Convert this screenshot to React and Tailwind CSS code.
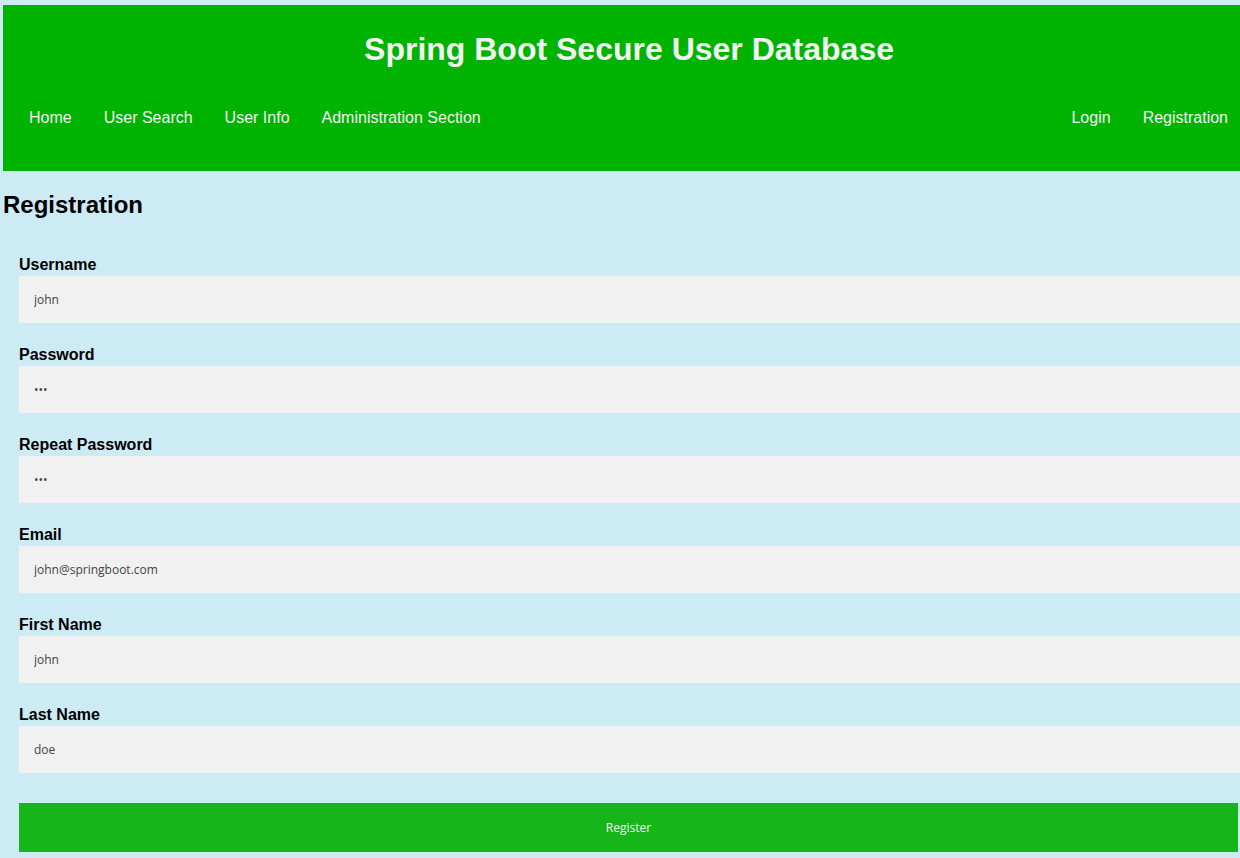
import React from 'react'

const leftNav = ['Home', 'User Search', 'User Info', 'Administration Section']
const rightNav = ['Login', 'Registration']

const fields = [
  { label: 'Username', value: 'john', type: 'text' },
  { label: 'Password', value: 'abc', type: 'password' },
  { label: 'Repeat Password', value: 'abc', type: 'password' },
  { label: 'Email', value: 'john@springboot.com', type: 'text' },
  { label: 'First Name', value: 'john', type: 'text' },
  { label: 'Last Name', value: 'doe', type: 'text' },
]

export default function App() {
  return (
    <div
      className="min-h-[858px] w-[1240px] overflow-hidden bg-[#cdebf5] pl-[3px] pt-[5px]"
      style={{ fontFamily: '"Liberation Sans", Arial, sans-serif' }}
    >
      {/* header */}
      <header className="w-[1252px] h-[166px] bg-[#00b300] text-[#f2f2f2]">
        <h1 className="pt-[26px] text-center text-[32px] font-bold leading-[37px]">
          Spring Boot Secure User Database
        </h1>
        <nav className="mt-[38px] flex items-center pl-[10px] pr-[11px] text-[16px] leading-[24px]">
          <div className="flex">
            {leftNav.map((item) => (
              <span key={item} className="px-[16px]">{item}</span>
            ))}
          </div>
          <div className="ml-auto flex">
            {rightNav.map((item) => (
              <span key={item} className="px-[16px]">{item}</span>
            ))}
          </div>
        </nav>
      </header>

      <h2 className="mt-[20px] text-[24px] font-bold leading-[28px] text-black">Registration</h2>

      <form className="pl-[16px] pt-[34px]">
        {fields.map((f) => (
          <div key={f.label} className="mb-[20px]">
            <label className="block text-[16px] font-bold leading-[23px] text-black">{f.label}</label>
            <input
              type={f.type}
              defaultValue={f.value}
              readOnly
              className="block h-[47px] w-[1260px] bg-[#f1f1f1] px-[15px] text-[12px] text-[#444] outline-none"
              style={{ fontFamily: '"Open Sans", "Noto Sans", sans-serif' }}
            />
          </div>
        ))}
        <button
          type="button"
          className="mt-[30px] block h-[49px] w-[1219px] bg-[#16b61a] text-[12px] text-[#f2f2f2]"
          style={{ fontFamily: '"Open Sans", "Noto Sans", sans-serif' }}
        >
          Register
        </button>
      </form>
    </div>
  )
}
